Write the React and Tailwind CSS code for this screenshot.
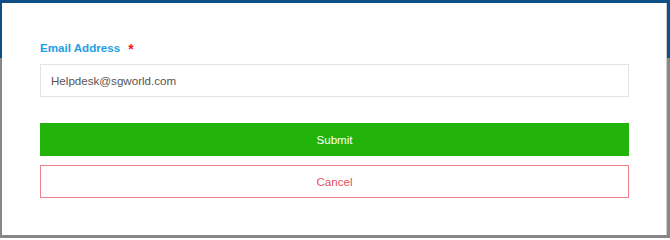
export default function App() {
  return (
    <div className="w-[670px] h-[238px] pt-[3px] pl-[2px] bg-[linear-gradient(to_bottom,#0e4f85_0px,#0e4f85_58px,#878787_58px)] font-['Liberation_Sans',Arial,sans-serif]">
      <div className="w-[665px] h-[232px] bg-white pl-[38px] pr-[37px] pt-[37px] border-r border-[#d0d0d0]">
        <div className="flex items-center h-[16px] text-[11.6px] leading-[16px]">
          <span className="font-bold text-[#1ca0e4]">Email Address</span>
          <span className="ml-[8px] text-[14px] font-bold text-[#ee1c1c] leading-[16px] mt-[2px]">*</span>
        </div>
        <input
          type="text"
          defaultValue="Helpdesk@sgworld.com"
          className="mt-[8px] block w-full h-[33px] border border-[#e3e3e3] px-[10px] text-[11.6px] text-[#555555] outline-none"
        />
        <button className="mt-[26px] block w-full h-[33px] bg-[#22b40a] text-white text-[11.6px]">
          Submit
        </button>
        <button className="mt-[9px] block w-full h-[33px] bg-white border border-[#f0808c] text-[#e8505c] text-[11.6px]">
          Cancel
        </button>
      </div>
    </div>
  )
}
